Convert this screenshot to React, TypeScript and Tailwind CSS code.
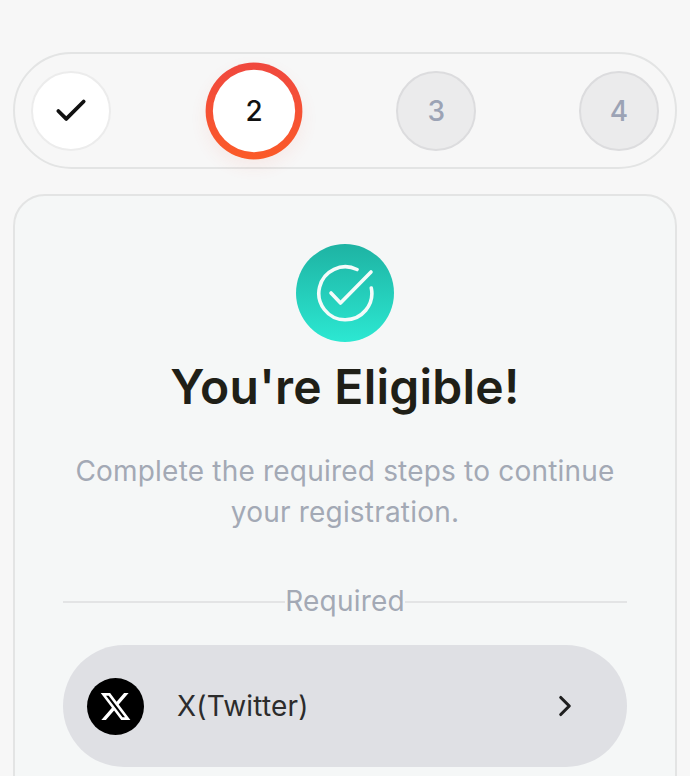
import React from 'react';
import { Check, ChevronRight } from 'lucide-react';

const XLogo = () => (
  <svg viewBox="0 0 24 24" width="33" height="33" fill="#fff">
    <path d="M18.244 2.25h3.308l-7.227 8.26 8.502 11.24H16.17l-5.214-6.817L4.99 21.75H1.68l7.73-8.835L1.254 2.25H8.08l4.713 6.231zm-1.161 17.52h1.833L7.084 4.126H5.117z" />
  </svg>
);

const Step = ({ n }: { n: number }) => (
  <div className="w-20 h-20 rounded-full bg-[#ebebec] border-2 border-[#dcdcde] flex items-center justify-center text-[28px] font-medium text-[#9ca3b5]">
    {n}
  </div>
);

export default function App() {
  return (
    <div
      className="h-[776px] overflow-hidden bg-[#f7f7f7] px-[13px] pt-[52px]"
      style={{ fontFamily: 'Inter, "Liberation Sans", sans-serif' }}
    >
      <div className="h-[117px] rounded-full border-2 border-[#e3e4e4] flex items-center justify-between px-4">
        <div className="w-20 h-20 rounded-full bg-white border-2 border-[#ececec] flex items-center justify-center text-[#111]">
          <Check size={38} strokeWidth={2.4} />
        </div>
        <div className="w-20 h-20 scale-[1.21] rounded-full bg-gradient-to-b from-[#f0483e] to-[#fb5a27] p-[6px] shadow-[0_6px_14px_rgba(240,80,50,0.08)]">
          <div className="w-full h-full rounded-full bg-white flex items-center justify-center text-[23px] font-medium text-[#111]">
            2
          </div>
        </div>
        <Step n={3} />
        <Step n={4} />
      </div>

      <div className="mt-[25px] h-[700px] rounded-[32px] border-2 border-[#e3e4e4] bg-[#f5f7f7] px-12 pt-[48px]">
        <div className="mx-auto w-[98px] h-[98px] rounded-full bg-gradient-to-b from-[#1eb3a3] to-[#2ce8d2] flex items-center justify-center">
          <svg viewBox="0 0 58 58" width="58" height="58" fill="none" stroke="#f4fbfa" strokeWidth="3.6" strokeLinecap="round" strokeLinejoin="round">
            <path d="M41 5.5A26.5 26.5 0 1 0 55.3 24" />
            <path d="M15 29l9.5 10L55 8" />
          </svg>
        </div>
        <h1 className="mt-4 text-center text-[48px] leading-[58px] font-semibold text-[#1f1f17] tracking-[0.25px]">
          You're Eligible!
        </h1>
        <p className="mt-[35px] text-center text-[28px] leading-[41px] tracking-[0.2px] text-[#a3a9b5]">
          Complete the required steps to continue
          <br />
          your registration.
        </p>
        <div className="mt-[48px] flex items-center">
          <div className="flex-1 h-0.5 bg-[#e3e4e5]" />
          <span className="text-[28px] leading-[41px] tracking-[0.2px] text-[#a3a9b5]">Required</span>
          <div className="flex-1 h-0.5 bg-[#e3e4e5]" />
        </div>
        <div className="mt-[23px] h-[122px] rounded-full bg-[#dfe0e4] flex items-center pl-6 pr-[45px]">
          <div className="w-[57px] h-[57px] rounded-full bg-black flex items-center justify-center">
            <XLogo />
          </div>
          <span className="ml-[33px] flex-1 text-[28px] tracking-[0.2px] text-[#2c2c2c]">X(Twitter)</span>
          <ChevronRight size={34} strokeWidth={2.2} className="text-[#1f1f1f]" />
        </div>
      </div>
    </div>
  );
}
